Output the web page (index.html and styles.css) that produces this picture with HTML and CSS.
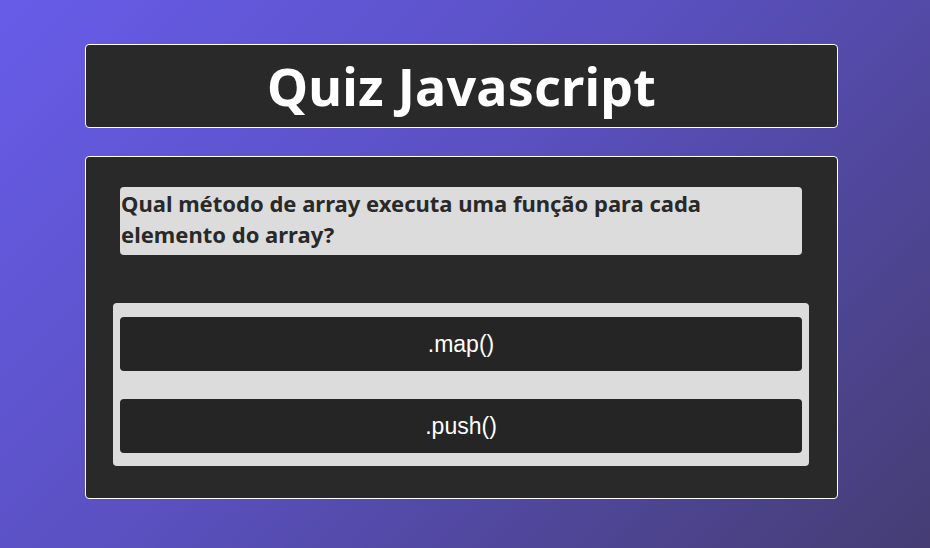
FILE: index.html
```html
<!DOCTYPE html>
<html lang="pt-BR">
<head>
<meta charset="utf-8">
<title>Quiz Javascript</title>
<link rel="stylesheet" href="styles.css">
</head>
<body>
<div class="page">
  <header class="header">
    <h1 class="title">Quiz Javascript</h1>
  </header>
  <main class="quiz">
    <div class="question">Qual método de array executa uma função para cada elemento do array?</div>
    <div class="answers">
      <button class="answer">.map()</button>
      <button class="answer">.push()</button>
    </div>
  </main>
</div>
</body>
</html>
```
FILE: styles.css
```css
html, body {
  margin: 0;
  height: 100%;
}
body {
  background: linear-gradient(135deg, #675ce8 0%, #5a50c0 45%, #453d73 100%);
  font-family: "Noto Sans", "DejaVu Sans", sans-serif;
}
.page {
  padding: 44px 92px 0 85px;
  display: flex;
  flex-direction: column;
  gap: 28px;
}
.header {
  background: #292929;
  border: 1px solid #ffffff;
  border-radius: 4px;
  height: 82px;
  display: flex;
  align-items: center;
  justify-content: center;
}
.title {
  margin: 0;
  color: #ffffff;
  font-size: 52px;
  font-weight: 700;
  line-height: 1;
  letter-spacing: 0.2px;
}
.quiz {
  background: #292929;
  border: 1px solid #ffffff;
  border-radius: 4px;
  padding: 30px 28px 32px 27px;
  display: flex;
  flex-direction: column;
  gap: 48px;
}
.question {
  margin: 0 7px;
  background: #dcdcdc;
  border-radius: 4px;
  color: #292929;
  font-size: 22px;
  font-weight: 700;
  line-height: 31px;
  padding: 1px 40px 5px 1px;
}
.answers {
  background: #dcdcdc;
  border-radius: 4px;
  padding: 14px 7px 13px;
  display: flex;
  flex-direction: column;
  gap: 28px;
}
.answer {
  height: 54px;
  border: none;
  border-radius: 4px;
  background: #252525;
  color: #ffffff;
  font-family: "Liberation Sans", Arial, sans-serif;
  font-size: 23px;
  padding: 0;
}
```
